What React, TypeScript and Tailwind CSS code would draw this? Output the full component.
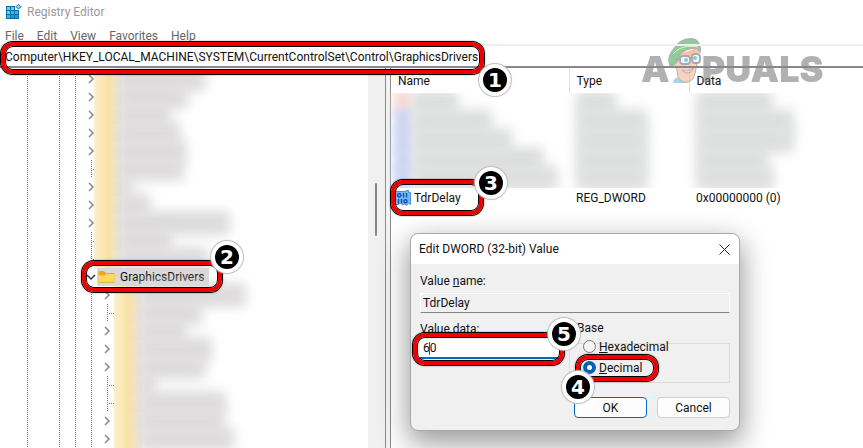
import { useState } from "react"
import type { ReactNode } from "react"
import clsx from "clsx"

type Kind = "closed" | "leaf"

const menuItems = ["File", "Edit", "View", "Favorites", "Help"]

const siblingKeys: { kind: Kind; width: number }[] = [
  { kind: "closed", width: 88 },
  { kind: "closed", width: 70 },
  { kind: "closed", width: 52 },
  { kind: "closed", width: 62 },
  { kind: "closed", width: 68 },
  { kind: "leaf", width: 66 },
  { kind: "closed", width: 14 },
  { kind: "closed", width: 32 },
  { kind: "closed", width: 112 },
  { kind: "leaf", width: 54 },
  { kind: "leaf", width: 90 },
]

const childKeys: { kind: Kind; width: number }[] = [
  { kind: "closed", width: 108 },
  { kind: "leaf", width: 64 },
  { kind: "closed", width: 48 },
  { kind: "closed", width: 74 },
  { kind: "closed", width: 68 },
  { kind: "leaf", width: 18 },
  { kind: "leaf", width: 88 },
  { kind: "closed", width: 86 },
  { kind: "closed", width: 96 },
]

const hiddenValues = [
  { icon: "bg-[#f8dcd8]", name: 46, type: 40, data: 76 },
  { icon: "bg-[#cdd6f4]", name: 80, type: 72, data: 98 },
  { icon: "bg-[#cdd6f4]", name: 100, type: 72, data: 98 },
  { icon: "bg-[#cdd6f4]", name: 132, type: 72, data: 72 },
  { icon: "bg-[#cdd6f4]", name: 146, type: 72, data: 78 },
]

function Callout({
  number,
  className,
  badgeClassName,
}: {
  number: number
  className: string
  badgeClassName: string
}) {
  return (
    <div className={clsx("pointer-events-none absolute z-20", className)}>
      <div className="absolute inset-px rounded-xl border-4 border-[#ee0000] shadow-[0_0_0_1px_#000,inset_0_0_0_1px_#000,0_0_2px_1px_#0006]" />
      <span
        className={clsx(
          "absolute flex size-8 items-center justify-center rounded-full border-4 border-white bg-black font-['DejaVu_Sans','Open_Sans',sans-serif] text-xl font-bold text-white shadow-[0_0_1px_1px_#bbb]",
          badgeClassName
        )}
      >
        {number}
      </span>
    </div>
  )
}

function RegistryIcon() {
  return (
    <svg viewBox="0 0 16 16" className="size-4" aria-hidden="true">
      <path d="M0 2h9v4h4v9H0z" fill="#0b6ea8" />
      <path d="M1 3h3v3H1zM5 3h3v3H5zM1 7h3v3H1z" fill="#5fd0f7" />
      <path d="M5 7h3v3H5zM9 7h3v3H9zM1 11h3v3H1z" fill="#31b8ee" />
      <path d="M5 11h3v3H5zM9 11h3v3H9z" fill="#169bd8" />
      <path d="M12.500 0.200 15 2.700 12.500 5.200 10 2.700z" fill="#7ad6fa" stroke="#0b7fbb" />
    </svg>
  )
}

function FolderIcon() {
  return (
    <svg viewBox="0 0 17 14" className="h-[14px] w-[17px] shrink-0" aria-hidden="true">
      <path d="M0.500 2a1 1 0 0 1 1-1H6l2 2h7.500a1 1 0 0 1 1 1v8H0.500z" fill="#f0a91c" />
      <path d="M0.500 5.500H6.500L8 4h7.500a1 1 0 0 1 1 1v7a1 1 0 0 1-1 1h-14a1 1 0 0 1-1-1z" fill="#ffd766" />
      <path d="M0.800 12.500h15.400" stroke="#e9b23c" />
    </svg>
  )
}

function DwordIcon() {
  return (
    <svg viewBox="0 0 16 16" className="size-4 shrink-0" aria-hidden="true">
      <path
        d="M0.500 1.500H11V0.500h2.500v2h2v12l-2-1-2 2-2-1.500-2 1-2-2-2 1.500H0.500z"
        fill="#79b7ea"
        stroke="#4c93d2"
      />
      <g fill="none" stroke="#0a50c8" strokeWidth="1.400">
        <rect x="2.700" y="3.700" width="3" height="3" rx="1" />
        <path d="M8.500 3v4.400M11.500 3v4.400M3.500 9v4.400M6.500 9v4.400" />
        <rect x="9" y="9.700" width="3" height="3" rx="1" />
      </g>
    </svg>
  )
}

function Guide() {
  return (
    <span className="flex h-full w-4 shrink-0 justify-center">
      <span className="h-full w-px bg-[repeating-linear-gradient(to_bottom,#777_0_1px,transparent_1px_2px)]" />
    </span>
  )
}

function Expander({ kind }: { kind: Kind | "open" }) {
  if (kind === "leaf") {
    return (
      <span className="flex h-full w-4 shrink-0 items-center justify-end">
        <span className="h-full w-px bg-[repeating-linear-gradient(to_bottom,#777_0_1px,transparent_1px_2px)]" />
        <span className="h-px w-[7px] bg-[repeating-linear-gradient(to_right,transparent_0_1px,#777_1px_2px)]" />
      </span>
    )
  }
  return (
    <button
      type="button"
      aria-label={kind === "open" ? "Collapse" : "Expand"}
      className="flex h-full w-4 shrink-0 items-center justify-center"
    >
      <svg viewBox="0 0 10 10" className="size-[10px]" fill="none" strokeWidth="1.500">
        {kind === "open" ? (
          <path d="M1 3l4 4 4-4" stroke="#333" />
        ) : (
          <path d="M3 1l4 4-4 4" stroke="#8a8a8a" />
        )}
      </svg>
    </button>
  )
}

function TreeRow({
  kind,
  nested,
  children,
}: {
  kind: Kind | "open"
  nested?: boolean
  children: ReactNode
}) {
  return (
    <li className="relative flex h-[18px] items-center pl-[19px]">
      <Guide />
      <span className="w-4 shrink-0" />
      <Guide />
      <Guide />
      {nested && <Guide />}
      <Expander kind={kind} />
      {children}
    </li>
  )
}

function HiddenKey({ width, nested }: { width: number; nested?: boolean }) {
  return (
    <span className={clsx("flex h-full items-center", nested ? "-ml-px" : "-ml-[5px]")}>
      <span className="h-full w-7 bg-linear-to-r from-[#fdf0cf] via-[#fbe2a4] via-50% to-[#f3e9d6]" />
      <span className="-ml-1 h-6 rounded bg-[#dddbdb] blur-[6px]" style={{ width }} />
    </span>
  )
}

function Blurred({ width }: { width: number }) {
  return <div className="-my-[3px] h-[25px] rounded bg-[#dddede] blur-[6px]" style={{ width }} />
}

function Tree() {
  return (
    <section className="flex w-[386px] shrink-0 border-r border-[#8a8a8a]">
      <ul className="min-w-0 flex-1 overflow-hidden pt-[2px]">
        {siblingKeys.map((key, i) => (
          <TreeRow key={i} kind={key.kind}>
            <HiddenKey width={key.width} />
          </TreeRow>
        ))}
        <TreeRow kind="open">
          <span className="-ml-0.5 flex h-full items-center gap-[5px] bg-[#d9d9d9] px-px pr-1">
            <FolderIcon />
            GraphicsDrivers
          </span>
          <Callout
            number={2}
            className="-top-2 left-[81px] h-[33px] w-[142px]"
            badgeClassName="-top-[19px] -right-5"
          />
        </TreeRow>
        {childKeys.map((key, i) => (
          <TreeRow key={i} kind={key.kind} nested>
            <HiddenKey width={key.width} nested />
          </TreeRow>
        ))}
      </ul>

      {/* scrollbar */}
      <div className="w-[17px] bg-[#f0f0f0] pt-[115px]">
        <div className="ml-[7px] h-[53px] w-0.5 rounded bg-[#858585]" />
      </div>
    </section>
  )
}

function ValueList() {
  return (
    <table className="w-full table-fixed border-collapse text-left">
      <colgroup>
        <col className="w-[178px]" />
        <col className="w-[120px]" />
        <col />
      </colgroup>
      <thead className="relative z-10 bg-white">
        <tr className="h-[25px]">
          <th className="border-r border-[#e2e2e2] p-0 pl-[7px] font-normal">Name</th>
          <th className="border-r border-[#e2e2e2] p-0 pl-[7px] font-normal">Type</th>
          <th className="p-0 pl-[7px] font-normal">Data</th>
        </tr>
      </thead>
      <tbody>
        {hiddenValues.map((row, i) => (
          <tr key={i} className="h-[19px]">
            <td className="p-0 pl-[3px]">
              <div className="flex">
                <div className={clsx("-my-[3px] h-[25px] w-[18px] blur-[4px]", row.icon)} />
                <Blurred width={row.name} />
              </div>
            </td>
            <td className="p-0 pl-[7px]">
              <Blurred width={row.type} />
            </td>
            <td className="p-0 pl-[7px]">
              <Blurred width={row.data} />
            </td>
          </tr>
        ))}
        <tr className="h-5">
          <td className="relative bg-white p-0 pl-1">
            <div className="flex items-center gap-[3px]">
              <DwordIcon />
              TdrDelay
            </div>
            <Callout
              number={3}
              className="-top-[9px] -left-px h-[37px] w-[94px]"
              badgeClassName="-top-3 -right-[23px]"
            />
          </td>
          <td className="relative bg-white p-0 pl-[7px]">REG_DWORD</td>
          <td className="relative bg-white p-0 pl-[7px]">0x00000000 (0)</td>
        </tr>
      </tbody>
    </table>
  )
}

function EditDialog() {
  const [value, setValue] = useState("60")
  const [base, setBase] = useState("decimal")

  return (
    <div
      role="dialog"
      aria-labelledby="dialog-title"
      className="absolute top-[165px] left-[19px] z-10 w-[330px] rounded-lg border border-[#a8a8a8] bg-[#f0f0f0] shadow-[0_10px_28px_2px_#0006]"
    >
      <div className="flex h-[30px] items-center justify-between rounded-t-lg bg-white pr-[9px] pl-2">
        <h2 id="dialog-title">Edit DWORD (32-bit) Value</h2>
        <button type="button" aria-label="Close">
          <svg viewBox="0 0 11 11" className="size-[11px]" stroke="#222" fill="none">
            <path d="M0.500 0.500l10 10M10.500 0.500l-10 10" />
          </svg>
        </button>
      </div>

      <form className="px-[9px] pt-[9px] pb-3" onSubmit={(e) => e.preventDefault()}>
        <label htmlFor="value-name" className="block h-5">
          Value <u>n</u>ame:
        </label>
        <input
          id="value-name"
          readOnly
          defaultValue="TdrDelay"
          className="block h-5 w-full border border-b-[#868686] border-x-white border-t-white bg-[#f0f0f0] px-0.5 outline-none"
        />

        <div className="mt-[7px] flex justify-between">
          <div className="w-[140px] pt-px">
            <label htmlFor="value-data" className="block h-[18px]">
              <u>V</u>alue data:
            </label>
            <div className="relative">
              <input
                id="value-data"
                value={value}
                onChange={(e) => setValue(e.target.value)}
                className="block h-5 w-full border-b-2 border-[#0067c0] bg-white px-[3px] outline-none"
              />
              <span className="absolute top-[3px] left-[9px] h-[13px] w-px bg-[#005fb8]" />
              <Callout
                number={5}
                className="-top-[7px] -left-2 h-[34px] w-[153px]"
                badgeClassName="-top-[14px] -right-[15px]"
              />
            </div>
          </div>

          <fieldset className="relative h-[63px] w-[161px]">
            <div className="absolute inset-x-0 top-[7px] bottom-0 border border-[#dcdcdc]" />
            <legend className="relative ml-1.5 h-4 bg-[#f0f0f0] px-0.5 leading-4">Base</legend>
            <label className="relative ml-[14px] flex h-[21px] items-center gap-[3px]">
              <input
                type="radio"
                name="base"
                checked={base === "hexadecimal"}
                onChange={() => setBase("hexadecimal")}
                className="size-[13px] appearance-none rounded-full border border-[#777] bg-[#f5f5f5] checked:border-4 checked:border-[#005fb8] checked:bg-white"
              />
              <span>
                <u>H</u>exadecimal
              </span>
            </label>
            <label className="relative ml-[14px] flex h-[21px] items-center gap-[3px]">
              <input
                type="radio"
                name="base"
                checked={base === "decimal"}
                onChange={() => setBase("decimal")}
                className="size-[13px] appearance-none rounded-full border border-[#777] bg-[#f5f5f5] checked:border-4 checked:border-[#005fb8] checked:bg-white"
              />
              <span>
                <u>D</u>ecimal
              </span>
              <Callout
                number={4}
                className="-top-[3px] -left-2 h-7 w-[84px]"
                badgeClassName="top-[17px] -left-[13px]"
              />
            </label>
          </fieldset>
        </div>

        <div className="mt-[14px] flex justify-end gap-[10px]">
          <button
            type="submit"
            className="h-[21px] w-[73px] rounded border border-[#0067c0] bg-[#fdfdfd]"
          >
            OK
          </button>
          <button
            type="button"
            className="h-[21px] w-[73px] rounded border border-[#d0d0d0] bg-[#fdfdfd]"
          >
            Cancel
          </button>
        </div>
      </form>
    </div>
  )
}

function Watermark() {
  return (
    <div className="pointer-events-none absolute top-[37px] left-[641px] z-10 flex items-end font-['Inter','Liberation_Sans',sans-serif] text-4xl leading-9 font-black text-[#666] opacity-50">
      <span className="-mb-1">A</span>
      <svg viewBox="0 0 36 46" className="-ml-1 h-[46px] w-9" aria-hidden="true">
        <path d="M7 46c0-3 2-5 5-6l8 5 2 1z" fill="#4aa9e0" />
        <path
          d="M8 26l3 7 1 7c2 4 6 6 10 5 4-1 6-4 7-9l2-9 1-14-18 4-4 9z"
          fill="#f6a880"
          stroke="#666"
        />
        <path d="M14 17l17-6 1 3-1 4-17 3z" fill="#f08a4a" />
        <path
          d="M5 30C1 23 3 18 7 13 12 5 19 1 27 2c5 1 8 6 7 13l-3-4c-6 0-12 1-17 6-1 4-2 7-4 9z"
          fill="#1f9e2c"
          stroke="#666"
          strokeWidth="1.500"
        />
        <path d="M7 17C13 10 22 8 32 10" fill="none" stroke="#b8e8a8" />
        <g fill="#e8f7ff" stroke="#555" strokeWidth="1.800">
          <rect x="14" y="19" width="10" height="8" rx="3" />
          <rect x="26" y="17" width="8" height="9" rx="3" />
          <path d="M24 22l2-1M14 22l-5 1" />
        </g>
        <circle cx="20" cy="23" r="2" fill="#1689c9" />
        <circle cx="29" cy="21" r="2" fill="#1689c9" />
        <path d="M16 33c4 2 8 1 11-2-1 5-7 7-11 2z" fill="#fff" stroke="#555" />
      </svg>
      <span className="-mb-1">PUALS</span>
    </div>
  )
}

export default function App() {
  return (
    <div className="relative flex h-screen flex-col overflow-hidden bg-white font-['Roboto','Noto_Sans',sans-serif] text-xs leading-4 text-[#111]">
      <header className="flex h-6 shrink-0 items-center gap-[5px] pl-1.5 text-[#999]">
        <RegistryIcon />
        <h1>Registry Editor</h1>
      </header>

      <nav className="flex h-5 shrink-0 items-center gap-[13px] pt-1 pl-[5px] text-[#666]">
        {menuItems.map((item) => (
          <button key={item} type="button">
            {item}
          </button>
        ))}
      </nav>

      <div className="relative z-20 h-6 shrink-0 border-t-2 border-b-2 border-t-[#eeeeee] border-b-[#88888c]">
        <input
          aria-label="Address"
          defaultValue="Computer\HKEY_LOCAL_MACHINE\SYSTEM\CurrentControlSet\Control\GraphicsDrivers"
          className="block h-5 w-full pt-px pl-[5px] outline-none"
        />
        <Callout
          number={1}
          className="-top-[5px] left-0 h-[34px] w-[485px]"
          badgeClassName="top-[23px] -right-[26px]"
        />
      </div>

      <main className="flex min-h-0 flex-1">
        <Tree />
        <div className="w-1 shrink-0 bg-[#f3f3f3]" />
        <section className="relative min-w-0 flex-1 border-l border-[#8a8a8a]">
          <ValueList />
          <EditDialog />
        </section>
      </main>

      <Watermark />
    </div>
  )
}
